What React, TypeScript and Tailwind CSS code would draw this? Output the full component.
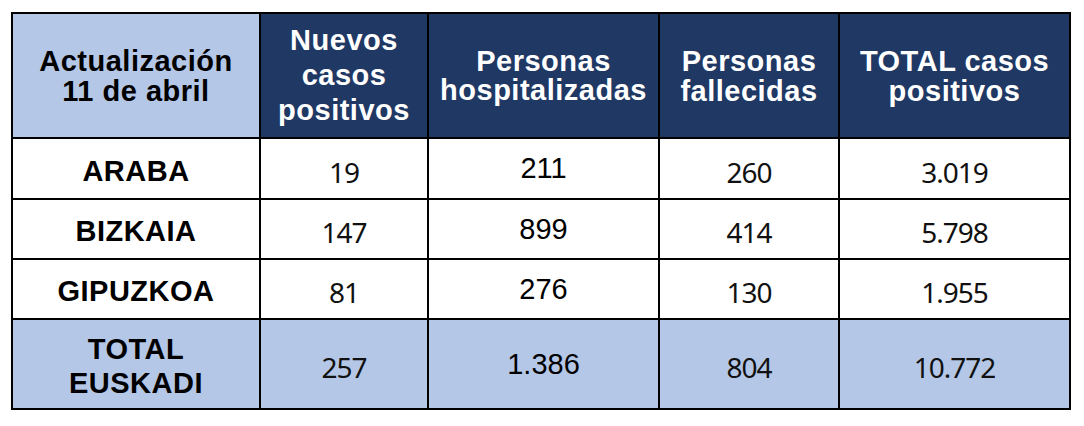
const rows = [
  { name: "ARABA", nuevos: "19", hosp: "211", fall: "260", total: "3.019" },
  { name: "BIZKAIA", nuevos: "147", hosp: "899", fall: "414", total: "5.798" },
  { name: "GIPUZKOA", nuevos: "81", hosp: "276", fall: "130", total: "1.955" },
];

const arial = "font-['Liberation_Sans',Arial,sans-serif]";
const segoe = "font-['Noto_Sans','Open_Sans',sans-serif]";

function HeadCell({ lines, leading }: { lines: string[]; leading: string }) {
  return (
    <div className="bg-[#203864] flex items-center justify-center text-center">
      <div className={`${arial} ${leading} text-white font-bold text-[29px] tracking-[0.5px]`}>
        {lines.map((l) => (
          <div key={l}>{l}</div>
        ))}
      </div>
    </div>
  );
}

function NumCell({ value, bg, arialFont }: { value: string; bg: string; arialFont?: boolean }) {
  return (
    <div className={`${bg} flex items-center justify-center`}>
      {arialFont ? (
        <span className={`${arial} text-[29px] text-black leading-none`}>{value}</span>
      ) : (
        <span className={`${segoe} text-[28px] tracking-[-1px] text-[#111] leading-none pt-[6px]`}>{value}</span>
      )}
    </div>
  );
}

export default function App() {
  return (
    <div className="w-[1084px] h-[426px] bg-white pl-[11px] pt-[12px]">
      <div className="grid w-fit grid-cols-[246px_166px_229px_178px_229px] grid-rows-[123px_59px_58px_58px_88px] gap-[2px] bg-black p-[2px]">
        {/* cabecera */}
        <div className="bg-[#b4c7e7] flex items-center justify-center text-center">
          <div className={`${arial} leading-[30px] text-black font-bold text-[29px] tracking-[0.5px]`}>
            <div>Actualización</div>
            <div>11 de abril</div>
          </div>
        </div>
        <HeadCell lines={["Nuevos", "casos", "positivos"]} leading="leading-[35px]" />
        <HeadCell lines={["Personas", "hospitalizadas"]} leading="leading-[29px]" />
        <HeadCell lines={["Personas", "fallecidas"]} leading="leading-[30px]" />
        <HeadCell lines={["TOTAL casos", "positivos"]} leading="leading-[30px]" />

        {/* territorios */}
        {rows.map((r) => (
          <div key={r.name} className="contents">
            <div className="bg-white flex items-center justify-center">
              <span className={`${arial} font-bold text-[29px] tracking-[0.5px] text-black leading-none pt-[5px]`}>
                {r.name}
              </span>
            </div>
            <NumCell value={r.nuevos} bg="bg-white" />
            <NumCell value={r.hosp} bg="bg-white" arialFont />
            <NumCell value={r.fall} bg="bg-white" />
            <NumCell value={r.total} bg="bg-white" />
          </div>
        ))}

        {/* total */}
        <div className="bg-[#b4c7e7] flex items-center justify-center text-center">
          <div className={`${arial} leading-[34px] text-black font-bold text-[29px] tracking-[0.5px] pt-[3px]`}>
            <div>TOTAL</div>
            <div>EUSKADI</div>
          </div>
        </div>
        <NumCell value="257" bg="bg-[#b4c7e7]" />
        <NumCell value="1.386" bg="bg-[#b4c7e7]" arialFont />
        <NumCell value="804" bg="bg-[#b4c7e7]" />
        <NumCell value="10.772" bg="bg-[#b4c7e7]" />
      </div>
    </div>
  );
}
